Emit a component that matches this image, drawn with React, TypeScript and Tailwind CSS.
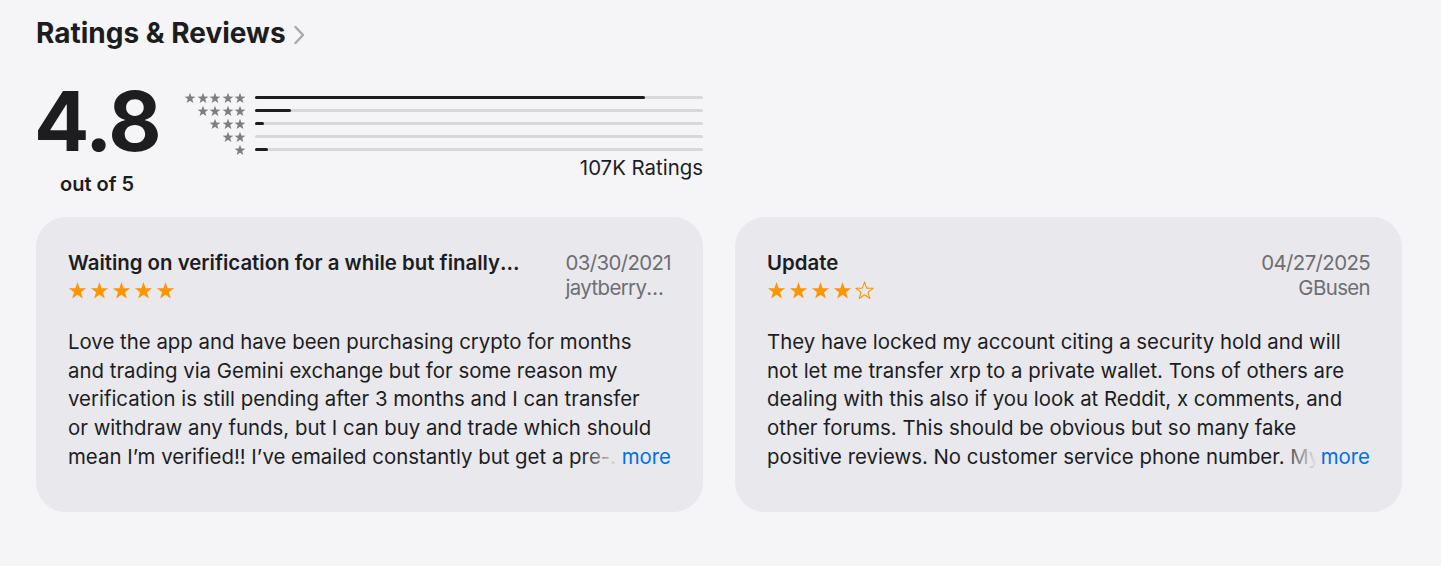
import React from 'react'

const STAR = 'M12 1.3L14.7 9.08L22.94 9.25L16.37 14.22L18.76 22.1L12 17.4L5.24 22.1L7.63 14.22L1.06 9.25L9.3 9.08Z'

function Star({ size, className, outline }: { size: number; className?: string; outline?: boolean }) {
  return (
    <svg width={size} height={size} viewBox="0 0 24 24" className={className}>
      <path
        d={STAR}
        fill={outline ? 'none' : 'currentColor'}
        stroke={outline ? 'currentColor' : 'none'}
        strokeWidth={outline ? 1.3 : 0}
        strokeLinejoin="round"
      />
    </svg>
  )
}

const HIST = [
  { stars: 5, pct: 87 },
  { stars: 4, pct: 8 },
  { stars: 3, pct: 2 },
  { stars: 2, pct: 0 },
  { stars: 1, pct: 3 },
]

const REVIEWS = [
  {
    title: 'Waiting on verification for a while but finally verified',
    date: '03/30/2021',
    author: 'jaytberry1234',
    rating: 5,
    body: "Love the app and have been purchasing crypto for months and trading via Gemini exchange but for some reason my verification is still pending after 3 months and I can transfer or withdraw any funds, but I can buy and trade which should mean I’m verified!! I’ve emailed constantly but get a pre-written response every single time and nothing changes.",
  },
  {
    title: 'Update',
    date: '04/27/2025',
    author: 'GBusen',
    rating: 4,
    body: 'They have locked my account citing a security hold and will not let me transfer xrp to a private wallet. Tons of others are dealing with this also if you look at Reddit, x comments, and other forums. This should be obvious but so many fake positive reviews. No customer service phone number. My account has been frozen for weeks now.',
  },
]

export default function App() {
  return (
    <div className="min-h-[566px] bg-[#f5f5f7] pl-[36px] pr-[39px] pt-[16px] text-[#1d1d1f]" style={{ fontFamily: 'Inter, "Noto Sans", sans-serif' }}>
      {/* Heading */}
      <div className="flex items-center gap-[7px]">
        <h2 className="text-[28px] leading-[34px] font-bold">Ratings &amp; Reviews</h2>
        <svg width="12" height="20" viewBox="0 0 12 20" className="mt-[3px] text-[#a8a8ad]">
          <path d="M2.5 2l7.5 8-7.5 8" fill="none" stroke="currentColor" strokeWidth="2.4" strokeLinecap="round" strokeLinejoin="round" />
        </svg>
      </div>

      {/* Summary */}
      <div className="mt-[31px] flex items-start">
        <div className="flex w-[122px] flex-col items-center">
          <div className="text-[82px] leading-[82px] font-bold tracking-[-0.02em]">4.8</div>
          <div className="mt-[9px] text-[20px] leading-[24px] font-semibold">out of 5</div>
        </div>
        <div className="ml-[24px] mt-[10px] w-[521px]">
          {HIST.map((h) => (
            <div key={h.stars} className="flex h-[13px] items-center">
              <div className="flex w-[64px] justify-end gap-[0.5px] text-[#7d7d82]">
                {Array.from({ length: h.stars }).map((_, i) => (
                  <Star key={i} size={12} />
                ))}
              </div>
              <div className="ml-[9px] h-[3px] flex-1 rounded-full bg-[#d8d8dc]">
                <div className="h-full rounded-full bg-[#1d1d1f]" style={{ width: `${h.pct}%` }} />
              </div>
            </div>
          ))}
          <div className="text-right text-[20.4px] leading-[24px]">107K Ratings</div>
        </div>
      </div>

      {/* Reviews */}
      <div className="mt-[21px] grid grid-cols-2 gap-[32px]">
        {REVIEWS.map((r) => (
          <div key={r.date} className="h-[295px] rounded-[30px] bg-[#e8e8ed] px-[32px] pt-[33px]">
            <div className="flex items-start justify-between gap-[44px]">
              <div className="min-w-0 flex-1">
                <div className="truncate text-[20.4px] leading-[25px] font-semibold">{r.title}</div>
                <div className="mt-[6px] flex gap-[3px] text-[#ff9500]">
                  {Array.from({ length: 5 }).map((_, i) => (
                    <Star key={i} size={19} outline={i >= r.rating} />
                  ))}
                </div>
              </div>
              <div className="shrink-0 text-right text-[20.4px] leading-[25px] tracking-[-0.03em] text-[#6e6e73]">
                <div>{r.date}</div>
                <div className="w-0 min-w-full truncate">{r.author}</div>
              </div>
            </div>
            <div className="relative mt-[28px]">
              <p className="line-clamp-5 pr-[12px] text-[20.4px] leading-[28.7px]">{r.body}</p>
              <button className="absolute bottom-0 right-0 bg-[linear-gradient(to_right,rgba(232,232,237,0),#e8e8ed_36px)] pl-[40px] text-[20.4px] leading-[28.7px] text-[#0071e3]">
                more
              </button>
            </div>
          </div>
        ))}
      </div>
    </div>
  )
}
